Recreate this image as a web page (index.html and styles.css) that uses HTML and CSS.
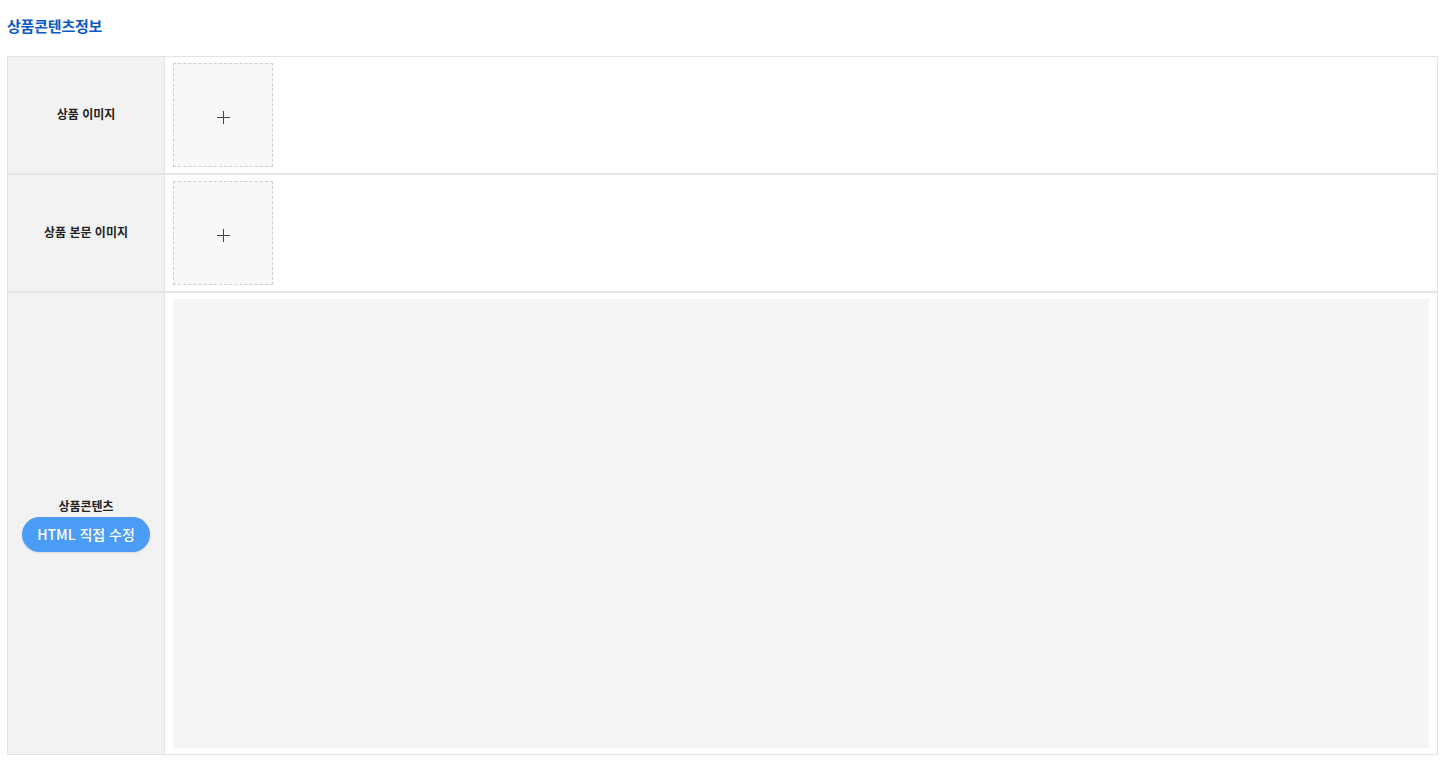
FILE: index.html
```html
<!DOCTYPE html>
<html lang="ko">
<head>
<meta charset="utf-8">
<title>상품콘텐츠정보</title>
<link rel="stylesheet" href="styles.css">
</head>
<body>
<div class="page">
  <h2 class="section-title">상품콘텐츠정보</h2>
  <div class="form-table">
    <div class="row row-img">
      <div class="th th-single">상품 이미지</div>
      <div class="td">
        <div class="upload"><span class="plus"></span></div>
      </div>
    </div>
    <div class="row row-img row-img2">
      <div class="th th-single">상품 본문 이미지</div>
      <div class="td">
        <div class="upload"><span class="plus"></span></div>
      </div>
    </div>
    <div class="row row-content">
      <div class="th th-stack">
        <span>상품콘텐츠</span>
        <button class="html-btn" type="button">HTML 직접 수정</button>
      </div>
      <div class="td">
        <div class="editor"></div>
      </div>
    </div>
  </div>
</div>
</body>
</html>
```

FILE: styles.css
```css
* { box-sizing: border-box; }
html, body { margin: 0; padding: 0; background: #fff; }
body {
  font-family: "Noto Sans CJK KR", "Noto Sans", sans-serif;
  color: #222;
}
.page { padding: 0 10px 0 7px; }
.section-title {
  margin: 0;
  padding-top: 16px;
  height: 56px;
  font-size: 15px;
  font-weight: 700;
  line-height: 20px;
  color: #0a5bc2;
  letter-spacing: -0.2px;
}
.form-table {
  border: 1px solid #e3e3e3;
  display: flex;
  flex-direction: column;
}
.row {
  display: flex;
  border-top: 2px solid #e6e6e6;
}
.row:first-child { border-top: none; }
.row-img { height: 116px; }
.row-img2 { height: 118px; }
.row-content { height: 463px; }
.th {
  width: 157px;
  flex: none;
  background: #f2f2f2;
  border-right: 1px solid #e3e3e3;
  display: flex;
  align-items: center;
  justify-content: center;
  font-size: 12px;
  font-weight: 700;
  color: #222;
}
.th-single { padding-bottom: 3px; }
.th-stack {
  flex-direction: column;
  gap: 3px;
  padding-top: 1px;
}
.td {
  flex: 1;
  padding: 6px 8px;
  display: flex;
}
.upload {
  width: 100px;
  height: 104px;
  border: 1px dashed #cfcfcf;
  background: #f8f8f8;
  display: flex;
  align-items: center;
  justify-content: center;
  padding-top: 4px;
}
.plus {
  position: relative;
  width: 13px;
  height: 13px;
}
.plus::before, .plus::after {
  content: "";
  position: absolute;
  background: #444;
}
.plus::before { left: 0; top: 6px; width: 13px; height: 1px; }
.plus::after { left: 6px; top: 0; width: 1px; height: 13px; }
.editor {
  flex: 1;
  background: #f4f4f4;
  border-radius: 2px;
}
.html-btn {
  width: 128px;
  height: 35px;
  border: none;
  border-radius: 18px;
  background: #4b9cf5;
  color: #fff;
  font-family: "Noto Sans CJK KR", "Noto Sans", sans-serif;
  font-size: 14px;
  font-weight: 500;
  padding: 0;
  box-shadow: 0 1px 2px rgba(0,0,0,0.1);
}
```
